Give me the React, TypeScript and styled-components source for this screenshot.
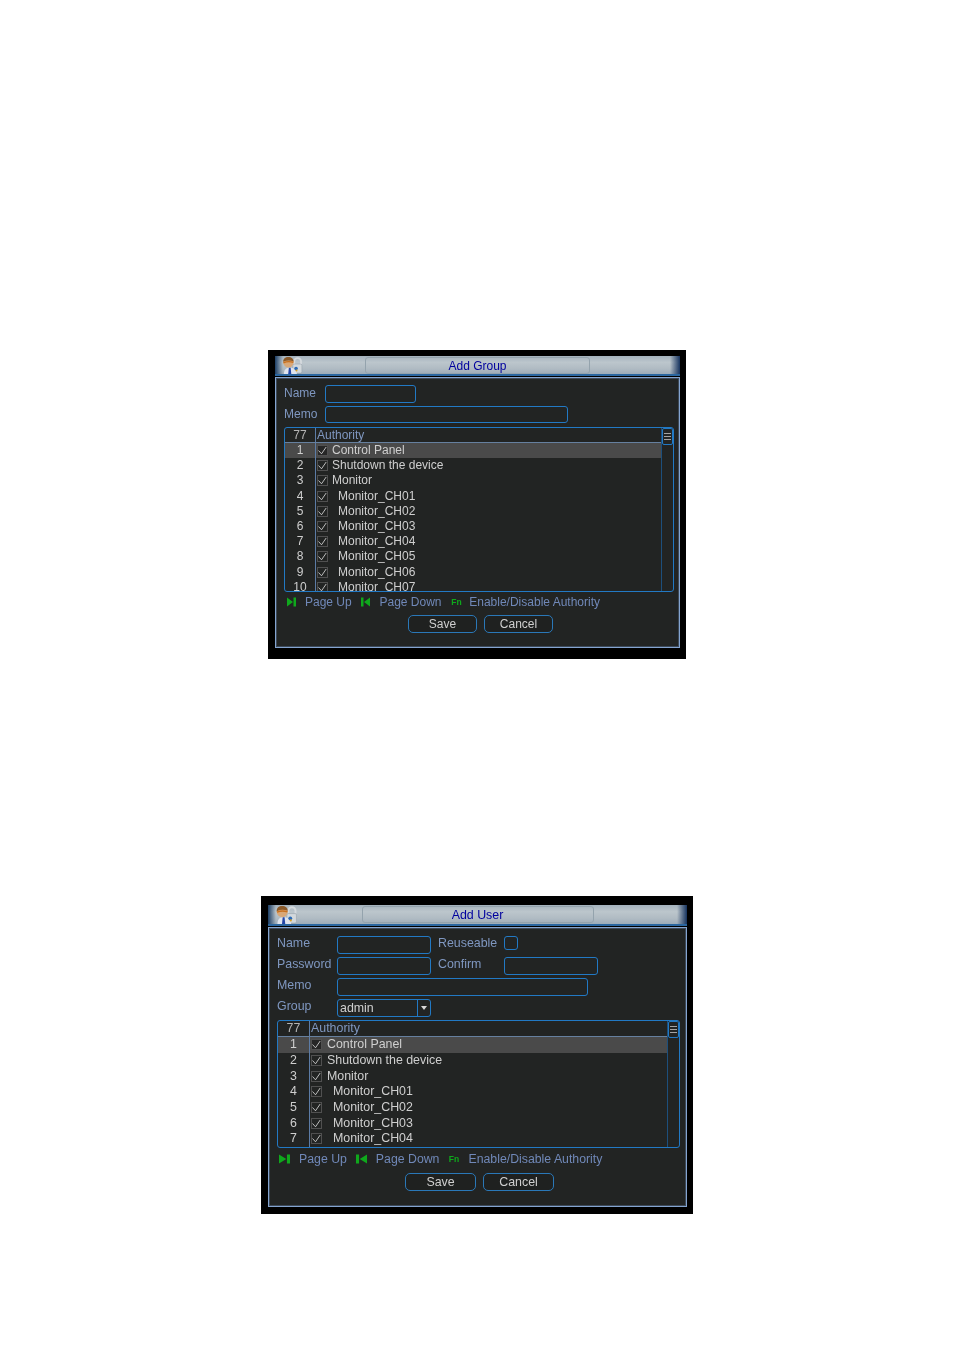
import React from 'react';
import styled, { createGlobalStyle, ThemeProvider } from 'styled-components';

const groupLayout = {
  width: 418,
  height: 309,
  padTop: 6,
  padLeft: 7,
  padRight: 6,
  barH: 18,
  avatarLeft: 5,
  titleW: 223,
  panelH: 271,
  panelPad: '7px 5px 0 8px',
  font: 12,
  labelW: 41,
  labelLift: 2,
  rowH: 15.2,
  headH: 14,
  numW: 30,
  textGap: 4,
  listH: 165,
  hintLeft: 3,
  hintGap: 9.75,
  iconW: 9,
  hintsH: 20,
  hintFont: 12,
  buttonW: 69,
  buttonH: 18,
  buttonsLeft: 124,
};

const userLayout = {
  width: 432,
  height: 318,
  padTop: 9,
  padLeft: 7,
  padRight: 6,
  barH: 19,
  avatarLeft: 6,
  titleW: 230,
  panelH: 280,
  panelPad: '8px 6px 0 8px',
  font: 12.4,
  labelW: 60,
  labelLift: 4,
  rowH: 15.7,
  headH: 15,
  numW: 31,
  textGap: 5,
  listH: 128,
  hintLeft: 2,
  hintGap: 9,
  iconW: 11,
  hintsH: 22,
  hintFont: 12.3,
  buttonW: 71,
  buttonH: 18,
  buttonsLeft: 128,
};

const GlobalStyle = createGlobalStyle`
  html, body {
    margin: 0;
    padding: 0;
    background: #fff;
  }
  body {
    font-family: "Liberation Sans", Arial, sans-serif;
  }
`;

const Page = styled.div`
  width: 954px;
  height: 1350px;
  padding-top: 350px;
  box-sizing: border-box;
  display: flex;
  flex-direction: column;
`;

const Dialog = styled.section<{ $left: number; $top?: number }>`
  width: ${(p) => p.theme.width}px;
  height: ${(p) => p.theme.height}px;
  margin-left: ${(p) => p.$left}px;
  margin-top: ${(p) => p.$top || 0}px;
  padding: ${(p) => p.theme.padTop}px ${(p) => p.theme.padRight}px 0 ${(p) => p.theme.padLeft}px;
  box-sizing: border-box;
  background: #000;
  font-size: ${(p) => p.theme.font}px;
  filter: blur(0.3px);
`;

const TitleBar = styled.header`
  height: ${(p) => p.theme.barH}px;
  margin-bottom: 1px;
  display: flex;
  align-items: center;
  justify-content: center;
  position: relative;
  background:
    linear-gradient(90deg, #1d3f66 0, rgba(120, 145, 170, 0) 8px, rgba(150, 165, 180, 0) calc(100% - 10px), #16335f 100%),
    linear-gradient(180deg, #a4b2bd 0, #bcc6cc 35%, #b0bbc3 70%, #9dacb9 100%);
  border-bottom: 2px solid #2a66a0;
`;

const TitleBox = styled.div`
  width: ${(p) => p.theme.titleW}px;
  height: 15px;
  border: 1px solid #94a3ad;
  border-radius: 3px;
  color: #00009e;
  font-size: ${(p) => p.theme.font}px;
  line-height: 17px;
  text-align: center;
`;

const Avatar = styled.svg`
  position: absolute;
  left: ${(p) => p.theme.avatarLeft}px;
  top: 0;
  width: 24px;
  height: 100%;
`;

const Panel = styled.div`
  height: ${(p) => p.theme.panelH}px;
  box-sizing: border-box;
  padding: ${(p) => p.theme.panelPad};
  border: 1px solid #84a4d0;
  box-shadow: inset 0 0 0 1px rgba(111, 143, 187, 0.35);
  background: #222423;
  display: flex;
  flex-direction: column;
`;

const FieldRow = styled.div`
  display: flex;
  align-items: center;
  height: 18px;
  margin-bottom: 3px;
`;

const Label = styled.label<{ $w?: number; $gap?: number }>`
  width: ${(p) => p.$w || p.theme.labelW}px;
  margin-left: ${(p) => p.$gap || 0}px;
  margin-bottom: ${(p) => p.theme.labelLift}px;
  flex: none;
  color: #7f97c0;
`;

const Input = styled.div<{ $w: number; $h?: number }>`
  width: ${(p) => p.$w}px;
  height: ${(p) => p.$h || 18}px;
  align-self: flex-start;
  box-sizing: border-box;
  border: 1px solid #2279c4;
  border-radius: 3px;
`;

const Select = styled(Input)`
  display: flex;
  align-items: center;
  color: #d0d0d0;
  padding-left: 2px;
`;

const SelectArrow = styled.span`
  margin-left: auto;
  width: 12px;
  height: 100%;
  border-left: 1px solid #2279c4;
  display: flex;
  align-items: center;
  justify-content: center;
  &::after {
    content: '';
    border: 3px solid transparent;
    border-top: 4px solid #d8d8d8;
    margin-top: 3px;
  }
`;

const ListBox = styled.div`
  height: ${(p) => p.theme.listH}px;
  box-sizing: border-box;
  border: 1px solid #2279c4;
  border-radius: 3px;
  display: flex;
  overflow: hidden;
  flex: none;
`;

const ListMain = styled.div`
  flex: 1;
  min-width: 0;
  overflow: hidden;
`;

const HeadRow = styled.div`
  height: ${(p) => p.theme.headH}px;
  display: flex;
  align-items: center;
  border-bottom: 1px solid #66809f;
  color: #7f97c0;
`;

const Row = styled.div<{ $active?: boolean }>`
  height: ${(p) => p.theme.rowH}px;
  display: flex;
  align-items: center;
  color: #cfcfcf;
  background: ${(p) => (p.$active ? '#4a4a4a' : 'transparent')};
`;

const NumCell = styled.div<{ $head?: boolean }>`
  width: ${(p) => p.theme.numW + 1}px;
  height: 100%;
  flex: none;
  display: flex;
  align-items: center;
  justify-content: center;
  box-sizing: border-box;
  padding-bottom: 1px;
  border-right: 1px solid #5c7ca6;
  color: ${(p) => (p.$head ? '#b4b4b4' : '#cfcfcf')};
`;

const HeadText = styled.span`
  margin: 0 0 1px 1px;
`;

const Check = styled.svg<{ $active?: boolean }>`
  width: 11px;
  height: 11px;
  flex: none;
  margin-left: 1px;
  background: ${(p) => (p.$active ? '#262626' : 'transparent')};
  border: 1px solid #505050;
  box-sizing: border-box;
`;

const RowText = styled.span<{ $indent?: boolean }>`
  margin-left: ${(p) => (p.$indent ? p.theme.textGap + 6 : p.theme.textGap)}px;
  margin-bottom: 1px;
  white-space: nowrap;
`;

const ScrollTrack = styled.div`
  width: 12px;
  box-sizing: border-box;
  flex: none;
  border-left: 1px solid #1d4f7c;
`;

const ScrollThumb = styled.div`
  height: 17px;
  box-sizing: border-box;
  border: 1px solid #2279c4;
  border-radius: 2px;
  display: flex;
  flex-direction: column;
  gap: 2px;
  padding: 4px 1px 0;
`;

const ScrollLine = styled.span`
  height: 1px;
  flex: none;
  background: #a4a4a4;
`;

const Hints = styled.div`
  height: ${(p) => p.theme.hintsH}px;
  display: flex;
  align-items: center;
  gap: ${(p) => p.theme.hintGap}px;
  padding-left: ${(p) => p.theme.hintLeft}px;
  color: #7088b8;
  font-size: ${(p) => p.theme.hintFont}px;
  flex: none;
`;

const Hint = styled.span`
  display: flex;
  align-items: center;
  gap: 9px;
  white-space: nowrap;
`;

const HintIcon = styled.svg`
  width: ${(p) => p.theme.iconW}px;
  height: 10px;
  flex: none;
`;

const FnTag = styled.span`
  width: ${(p) => p.theme.iconW}px;
  color: #0fa81c;
  font-size: 8.5px;
  font-weight: bold;
  text-align: center;
`;

const Buttons = styled.div`
  display: flex;
  gap: 7px;
  padding-left: ${(p) => p.theme.buttonsLeft}px;
  margin-top: 3px;
`;

const Button = styled.button`
  width: ${(p) => p.theme.buttonW}px;
  height: ${(p) => p.theme.buttonH}px;
  padding: 0;
  background: #1f2120;
  border: 1px solid #2a78b8;
  border-radius: 5px;
  color: #cfcfcf;
  font-family: inherit;
  font-size: ${(p) => p.theme.font}px;
`;

const AvatarIcon = () => (
  <Avatar viewBox="0 0 24 20">
    <path d="M14.500 9V5.500a3.800 3.800 0 0 1 7.500 0V9" fill="none" stroke="#d5dade" strokeWidth="2" />
    <rect x="13" y="9" width="10" height="10" rx="1.500" fill="#d2d8dc" stroke="#8c98a2" strokeWidth="0.5" />
    <path d="M3 20c0-5 2.500-7 6.500-7s7 2 8 7z" fill="#dfe4ee" />
    <path d="M8.500 13h2l.7 7H7.800z" fill="#2346a8" />
    <circle cx="8" cy="7" r="5.800" fill="#d9a878" />
    <path d="M2.200 6.500C2.200 3 4.500 1 8 1s5.800 2 5.800 5C10 4.500 6 4.500 2.200 6.500z" fill="#8a5a2a" />
    <path d="M2.500 7.500C6 6 10 6 13.500 7" fill="none" stroke="#c9701e" strokeWidth="1.600" />
    <circle cx="16.500" cy="14" r="2" fill="#2a6ab8" />
    <circle cx="17" cy="16.200" r="1.100" fill="#d9a020" />
  </Avatar>
);

const Tick = ({ active }: { active?: boolean }) => (
  <Check $active={active} viewBox="0 0 9 9">
    <path d="M0.500 4.500L3.500 7.800L8.200 1" fill="none" stroke="#e2e2e2" strokeWidth="0.8" />
  </Check>
);

const PageUpIcon = () => (
  <HintIcon viewBox="0 0 9 10" preserveAspectRatio="none">
    <path d="M0 0.500L6 5L0 9.500z" fill="#0fa81c" />
    <rect x="6.500" y="0.500" width="2.500" height="9" fill="#0fa81c" />
  </HintIcon>
);

const PageDownIcon = () => (
  <HintIcon viewBox="0 0 9 10" preserveAspectRatio="none">
    <rect x="0" y="0.500" width="2.500" height="9" fill="#0fa81c" />
    <path d="M9 0.500L3 5L9 9.500z" fill="#0fa81c" />
  </HintIcon>
);

const monitors = ['Monitor_CH01', 'Monitor_CH02', 'Monitor_CH03', 'Monitor_CH04', 'Monitor_CH05', 'Monitor_CH06', 'Monitor_CH07'];

const rows = [
  { text: 'Control Panel' },
  { text: 'Shutdown the device' },
  { text: 'Monitor' },
  ...monitors.map((text) => ({ text, indent: true })),
] as { text: string; indent?: boolean }[];

const AuthorityList = ({ count }: { count: number }) => (
  <ListBox>
    <ListMain>
      <HeadRow>
        <NumCell $head>77</NumCell>
        <HeadText>Authority</HeadText>
      </HeadRow>
      {rows.slice(0, count).map((row, i) => (
        <Row key={row.text} $active={i === 0}>
          <NumCell>{i + 1}</NumCell>
          <Tick active={i === 0} />
          <RowText $indent={row.indent}>{row.text}</RowText>
        </Row>
      ))}
    </ListMain>
    <ScrollTrack>
      <ScrollThumb>
        <ScrollLine />
        <ScrollLine />
        <ScrollLine />
      </ScrollThumb>
    </ScrollTrack>
  </ListBox>
);

const Footer = () => (
  <>
    <Hints>
      <Hint>
        <PageUpIcon />
        Page Up
      </Hint>
      <Hint>
        <PageDownIcon />
        Page Down
      </Hint>
      <Hint>
        <FnTag>Fn</FnTag>
        Enable/Disable Authority
      </Hint>
    </Hints>
    <Buttons>
      <Button>Save</Button>
      <Button>Cancel</Button>
    </Buttons>
  </>
);

const App: React.FC = () => (
  <Page>
    <GlobalStyle />
    <ThemeProvider theme={groupLayout}>
      <Dialog $left={268}>
        <TitleBar>
          <AvatarIcon />
          <TitleBox>Add Group</TitleBox>
        </TitleBar>
        <Panel>
          <FieldRow>
            <Label>Name</Label>
            <Input $w={91} />
          </FieldRow>
          <FieldRow>
            <Label>Memo</Label>
            <Input $w={243} $h={17} />
          </FieldRow>
          <AuthorityList count={10} />
          <Footer />
        </Panel>
      </Dialog>
    </ThemeProvider>
    <ThemeProvider theme={userLayout}>
      <Dialog $left={261} $top={237}>
        <TitleBar>
          <AvatarIcon />
          <TitleBox>Add User</TitleBox>
        </TitleBar>
        <Panel>
          <FieldRow>
            <Label>Name</Label>
            <Input $w={94} />
            <Label $w={66} $gap={7}>Reuseable</Label>
            <Input $w={14} $h={14} />
          </FieldRow>
          <FieldRow>
            <Label>Password</Label>
            <Input $w={94} />
            <Label $w={66} $gap={7}>Confirm</Label>
            <Input $w={94} />
          </FieldRow>
          <FieldRow>
            <Label>Memo</Label>
            <Input $w={251} />
          </FieldRow>
          <FieldRow>
            <Label>Group</Label>
            <Select $w={94}>
              admin
              <SelectArrow />
            </Select>
          </FieldRow>
          <AuthorityList count={7} />
          <Footer />
        </Panel>
      </Dialog>
    </ThemeProvider>
  </Page>
);

export default App;
